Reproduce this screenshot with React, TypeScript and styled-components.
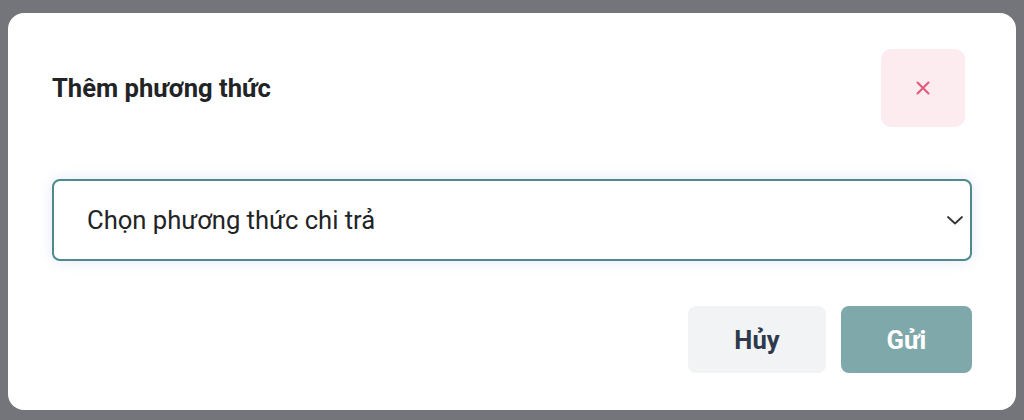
import React from "react";
import styled, { createGlobalStyle } from "styled-components";

const GlobalStyle = createGlobalStyle`
  html, body { margin: 0; padding: 0; }
  body {
    background: #74757a;
    font-family: Roboto, "Noto Sans", Arial, sans-serif;
  }
  * { box-sizing: border-box; }
`;

const Overlay = styled.div`
  width: 1024px;
  height: 420px;
  padding: 13px 8px 10px 8px;
  display: flex;
  background: #74757a;
`;

const Modal = styled.div`
  flex: 1;
  background: #ffffff;
  border-radius: 16px;
  padding: 36px 44px 37px 44px;
  display: flex;
  flex-direction: column;
`;

const Header = styled.div`
  display: flex;
  align-items: center;
  justify-content: space-between;
  padding-right: 7px;
`;

const Title = styled.h2`
  margin: 0;
  font-size: 25.6px;
  font-weight: 700;
  color: #222325;
`;

const CloseButton = styled.button`
  width: 84px;
  height: 78px;
  border: none;
  border-radius: 10px;
  background: #fcebef;
  display: flex;
  align-items: center;
  justify-content: center;
  padding: 0;
  cursor: pointer;
`;

const Select = styled.div`
  margin-top: 52px;
  height: 82px;
  border: 2px solid #4d898d;
  border-radius: 8px;
  padding: 0 6px 0 33px;
  display: flex;
  align-items: center;
  justify-content: space-between;
  font-size: 25.6px;
  color: #222325;
  box-shadow: 0 0 14px rgba(225, 229, 245, 0.9);
`;

const Footer = styled.div`
  margin-top: 45px;
  display: flex;
  justify-content: flex-end;
  gap: 15px;
`;

const Button = styled.button<{ $primary?: boolean; $w: number }>`
  width: ${(p) => p.$w}px;
  height: 67px;
  border: none;
  border-radius: 8px;
  font-family: Roboto, "Noto Sans", Arial, sans-serif;
  font-size: 25.6px;
  font-weight: 700;
  background: ${(p) => (p.$primary ? "#7fa8aa" : "#f2f3f5")};
  color: ${(p) => (p.$primary ? "#ffffff" : "#2e394b")};
  cursor: pointer;
`;

export default function App() {
  return (
    <>
      <GlobalStyle />
      <Overlay>
        <Modal>
          <Header>
            <Title>Thêm phương thức</Title>
            <CloseButton aria-label="close">
              <svg width="14" height="14" viewBox="0 0 14 14">
                <path d="M1.5 1.5 L12.5 12.5 M12.5 1.5 L1.5 12.5" stroke="#e0587a" strokeWidth="2" strokeLinecap="round" />
              </svg>
            </CloseButton>
          </Header>
          <Select>
            <span>Chọn phương thức chi trả</span>
            <svg width="18" height="10" viewBox="0 0 18 10">
              <path d="M2 2 L9 8.5 L16 2" stroke="#333" strokeWidth="1.8" fill="none" strokeLinecap="round" strokeLinejoin="round" />
            </svg>
          </Select>
          <Footer>
            <Button $w={138}>Hủy</Button>
            <Button $w={131} $primary>Gửi</Button>
          </Footer>
        </Modal>
      </Overlay>
    </>
  );
}
